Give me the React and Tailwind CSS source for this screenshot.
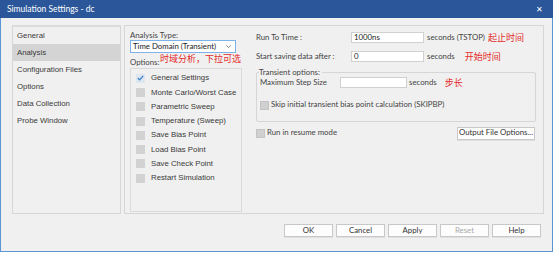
import React from "react";

const sans = { fontFamily: '"Liberation Sans", Arial, sans-serif' };
const ui = { fontFamily: 'Lato, "Open Sans", sans-serif' };
const cjk = { fontFamily: '"Noto Sans CJK SC", sans-serif' };

function Check({ checked }) {
  return (
    <div className={`w-[9px] h-[9px] flex items-center justify-center ${checked ? "bg-[#dde6ef]" : "bg-[#d2d2d2]"}`}>
      {checked && (
        <svg width="7" height="6" viewBox="0 0 7 6">
          <path d="M0.8 3 L2.7 4.9 L6.2 0.8" fill="none" stroke="#3b7fd1" strokeWidth="1.3" />
        </svg>
      )}
    </div>
  );
}

function Btn({ children, disabled, className = "" }) {
  return (
    <div
      className={`h-[13px] border border-[#c8c8c8] bg-[#fdfdfd] flex items-center justify-center text-[7.8px] leading-none shadow-[0_1px_0_#e0e0e0] ${disabled ? "text-[#a8a8a8]" : "text-[#333]"} ${className}`}
      style={ui}
    >
      {children}
    </div>
  );
}

export default function App() {
  const nav = ["General", "Analysis", "Configuration Files", "Options", "Data Collection", "Probe Window"];
  const opts = [
    "General Settings",
    "Monte Carlo/Worst Case",
    "Parametric Sweep",
    "Temperature (Sweep)",
    "Save Bias Point",
    "Load Bias Point",
    "Save Check Point",
    "Restart Simulation",
  ];
  return (
    <div className="w-[553px] h-[253px] bg-white overflow-hidden">
      <div className="w-[553px] h-[252px] flex flex-col border-x border-b border-[#5a95d8] bg-[#f0f0f0] relative">
        <div className="h-[18px] -mx-px bg-[#2b579a] flex items-center justify-between pl-[7px] pr-[10px]">
          <span className="text-white text-[8.5px] leading-none" style={ui}>Simulation Settings - dc</span>
          <span className="text-white text-[8px] leading-none">✕</span>
        </div>
        <div className="flex gap-[3px] pl-[11px] pt-[7px]">
          <div className="w-[109px] h-[189px] border border-[#d6d6d6] border-t-2 border-t-[#dcdcdc] bg-[#f0f0f0]">
            {nav.map((n, i) => (
              <div
                key={n}
                className={`h-[17px] flex items-center pl-[4px] text-[7.8px] text-[#3a3a3a] ${i === 1 ? "bg-[#d4d4d4]" : ""}`}
                style={sans}
              >
                {n}
              </div>
            ))}
          </div>
          <div className="w-[420px] h-[189px] border border-[#d6d6d6] flex pl-[5px] gap-[14px]">
            <div className="w-[112px] flex flex-col">
              <div className="mt-[5px] h-[9px] text-[7.8px] leading-[8px] text-[#444]" style={ui}>Analysis Type:</div>
              <div className="w-[106px] h-[13px] border border-[#7fb2e8] bg-white flex items-center justify-between pl-[2px] pr-[4px]">
                <span className="text-[7.8px] leading-none text-[#222]" style={ui}>Time Domain (Transient)</span>
                <svg width="5" height="3" viewBox="0 0 5 3"><path d="M0.3 0.3 L2.5 2.6 L4.7 0.3" fill="none" stroke="#777" strokeWidth="0.9" /></svg>
              </div>
              <div className="mt-[5px] h-[8px] text-[7.8px] leading-[8px] text-[#444] relative" style={ui}>
                Options:
                <span className="absolute left-[30px] top-[-5px] text-[9px] leading-[12px] text-[#e52a2a] whitespace-nowrap" style={cjk}>时域分析，下拉可选</span>
              </div>
              <div className="mt-[2px] h-[144px] border border-[#dadada] pt-[2px] pl-[5px]">
                {opts.map((o, i) => (
                  <div key={o} className="h-[14.3px] flex items-center gap-[6px]">
                    <Check checked={i === 0} />
                    <span className="text-[7.8px] leading-none text-[#3a3a3a]" style={sans}>{o}</span>
                  </div>
                ))}
              </div>
            </div>
            <div className="w-[280px] flex flex-col text-[7.8px] text-[#444]" style={ui}>
              <div className="mt-[6px] h-[11px] flex items-center">
                <span className="w-[95px]">Run To Time :</span>
                <div className="w-[73px] h-[11px] border border-[#d0d0d0] bg-white flex items-center pl-[2px] text-[#222]">1000ns</div>
                <span className="ml-[3px]">seconds (TSTOP)</span>
                <span className="ml-[3px] text-[9px] text-[#e52a2a]" style={cjk}>起止时间</span>
              </div>
              <div className="mt-[8px] h-[11px] flex items-center">
                <span className="w-[95px]">Start saving data after :</span>
                <div className="w-[73px] h-[11px] border border-[#d0d0d0] bg-white flex items-center pl-[2px] text-[#222]">0</div>
                <span className="ml-[3px]">seconds</span>
                <span className="ml-[10px] text-[9px] text-[#e52a2a]" style={cjk}>开始时间</span>
              </div>
              <div className="mt-[10px] w-[280px] h-[50px] border border-[#d6d6d6] rounded-[2px] relative px-[3px]">
                <span className="absolute left-[2px] top-[-6px] bg-[#f0f0f0] pr-[2px] leading-[10px]">Transient options:</span>
                <div className="mt-[4px] h-[11px] flex items-center">
                  <span className="w-[80px]">Maximum Step Size</span>
                  <div className="w-[67px] h-[11px] border border-[#d0d0d0] bg-white"></div>
                  <span className="ml-[2px]">seconds</span>
                  <span className="ml-[8px] text-[9px] text-[#e52a2a]" style={cjk}>步长</span>
                </div>
                <div className="mt-[12px] h-[10px] flex items-center">
                  <div className="w-[9px] h-[9px] bg-[#d0d0d0] border border-[#c4c4c4]"></div>
                  <span className="ml-[2px]">Skip initial transient bias point calculation (SKIPBP)</span>
                </div>
              </div>
              <div className="mt-[5px] h-[12px] flex items-center justify-between">
                <div className="flex items-center">
                  <div className="w-[9px] h-[9px] bg-[#d0d0d0] border border-[#c4c4c4]"></div>
                  <span className="ml-[2px]">Run in resume mode</span>
                </div>
                <Btn className="w-[78px] h-[12px] mr-[1px]">Output File Options...</Btn>
              </div>
            </div>
          </div>
        </div>
        <div className="flex justify-end gap-[3px] pr-[11px] mt-[10px]">
          <Btn className="w-[49px]">OK</Btn>
          <Btn className="w-[49px]">Cancel</Btn>
          <Btn className="w-[49px]">Apply</Btn>
          <Btn className="w-[49px]" disabled>Reset</Btn>
          <Btn className="w-[49px]">Help</Btn>
        </div>
      </div>
    </div>
  );
}
